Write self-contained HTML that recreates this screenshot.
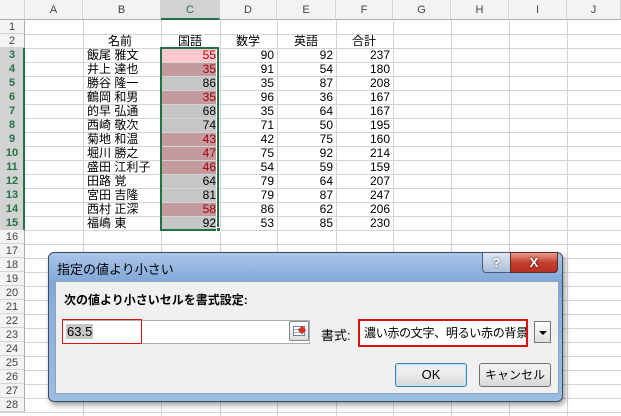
<!DOCTYPE html>
<html><head><meta charset="utf-8"><style>
*{margin:0;padding:0;box-sizing:border-box}
body{width:621px;height:416px;overflow:hidden;background:#fff;font-family:"Liberation Sans","Noto Sans CJK JP",sans-serif;position:relative}
.a{position:absolute}
.vl{position:absolute;top:0;width:1px;height:416px;background:#d4d4d4}
.hl{position:absolute;left:0;height:1px;width:621px;background:#d4d4d4}
.ch{position:absolute;top:0;height:20px;background:#f3f3f3;font-size:11px;color:#444;text-align:center;line-height:20px;border-right:1px solid #d4d4d4;border-bottom:1px solid #ababab}
.rh{position:absolute;left:0;width:25px;height:14px;font-size:11px;color:#444;text-align:center;line-height:14px;background:#f3f3f3}
.rh.s{background:#d2d2d2;color:#217346;font-weight:bold}
.t{position:absolute;font-size:12px;line-height:14px;height:14px;color:#000;white-space:nowrap}
.n{text-align:right}
.dlg{font-size:12px}
</style></head><body>
<div class="vl" style="left:83px"></div><div class="vl" style="left:161px"></div><div class="vl" style="left:220px"></div><div class="vl" style="left:277px"></div><div class="vl" style="left:336px"></div><div class="vl" style="left:393px"></div><div class="vl" style="left:451px"></div><div class="vl" style="left:509px"></div><div class="vl" style="left:567px"></div>
<div id="hls"></div>
<script>
var h='';for(var i=1;i<=28;i++){h+='<div class="hl" style="top:'+(20+i*14)+'px"></div>';}
document.getElementById('hls').innerHTML=h;
</script>
<div class="ch" style="left:0;width:25px"></div>
<div class="ch" style="left:25px;width:58px">A</div>
<div class="ch" style="left:83px;width:78px">B</div>
<div class="ch" style="left:161px;width:59px;background:#d2d2d2;color:#217346;border-bottom:2px solid #217346">C</div>
<div class="ch" style="left:220px;width:57px">D</div>
<div class="ch" style="left:277px;width:59px">E</div>
<div class="ch" style="left:336px;width:57px">F</div>
<div class="ch" style="left:393px;width:58px">G</div>
<div class="ch" style="left:451px;width:58px">H</div>
<div class="ch" style="left:509px;width:58px">I</div>
<div class="ch" style="left:567px;width:54px">J</div>
<div id="rows"></div>
<script>
var names=["飯尾 雅文","井上 達也","勝谷 隆一","鶴岡 和男","的早 弘通","西崎 敬次","菊地 和温","堀川 勝之","盛田 江利子","田路 覚","宮田 吉隆","西村 正深","福嶋 東"];
var c=[55,35,86,35,68,74,43,47,46,64,81,58,92],d=[90,91,35,96,35,71,42,75,54,79,79,86,53],e=[92,54,87,36,64,50,75,92,59,64,87,62,85],f=[237,180,208,167,167,195,160,214,159,207,247,206,230];
var s='';
for(var i=1;i<=28;i++){var y=20+(i-1)*14;s+='<div class="rh'+(i>=3&&i<=15?' s':'')+'" style="top:'+y+'px;border-bottom:1px solid #d4d4d4;border-right:1px solid #ababab">'+i+'</div>';}
s+='<div class="a" style="left:23px;top:48px;width:2px;height:182px;background:#217346"></div>';
s+='<div class="t" style="left:108px;top:34px">名前</div><div class="t" style="left:178px;top:34px">国語</div><div class="t" style="left:236px;top:34px">数学</div><div class="t" style="left:294px;top:34px">英語</div><div class="t" style="left:352px;top:34px">合計</div>';
for(var k=0;k<13;k++){var y=48+k*14;
var low=c[k]<63.5;var bg=k==0?'#ffc7ce':(low?'#c49a9e':'#c6c6c6');
s+='<div class="a" style="left:162px;top:'+(y+1)+'px;width:54px;height:13px;background:'+bg+'"></div>';
s+='<div class="t" style="left:87px;top:'+y+'px">'+names[k]+'</div>';
s+='<div class="t n" style="left:161px;width:55px;top:'+y+'px;color:'+(low?'#9c0006':'#000')+'">'+c[k]+'</div>';
s+='<div class="t n" style="left:220px;width:54px;top:'+y+'px">'+d[k]+'</div>';
s+='<div class="t n" style="left:277px;width:56px;top:'+y+'px">'+e[k]+'</div>';
s+='<div class="t n" style="left:336px;width:54px;top:'+y+'px">'+f[k]+'</div>';}
s+='<div class="a" style="left:160px;top:47px;width:59px;height:184px;border:2px solid #217346"></div>';
s+='<div class="a" style="left:216px;top:227px;width:5px;height:5px;background:#217346;border:1px solid #fff"></div>';
document.getElementById('rows').innerHTML=s;
</script>
<div class="a dlg" style="left:48px;top:252px;width:515px;height:150px;border:1px solid #3a4a63;border-radius:6px;background:linear-gradient(#aac6e8,#7fa6d8 30px,#8cb0dc 60px,#9cbde2);box-shadow:2px 3px 6px rgba(0,0,0,.4)">
<div class="a" style="left:8px;top:6px;font-size:13px;color:#000">指定の値より小さい</div>
<div class="a" style="left:433px;top:-1px;width:29px;height:21px;border:1px solid #4a5a78;border-radius:0 0 0 4px;background:linear-gradient(#dfe8f4,#a9bed8);text-align:center;font-weight:bold;color:#fff;font-size:13px;line-height:19px;text-shadow:0 0 2px #333">?</div>
<div class="a" style="left:461px;top:-1px;width:48px;height:21px;border:1px solid #5a2a2a;border-radius:0 0 4px 0;background:linear-gradient(#e8a090,#c4402e 50%,#b83020);text-align:center;font-weight:bold;color:#fff;font-size:13px;line-height:19px;text-shadow:0 0 2px #300">X</div>
<div class="a" style="left:6px;top:28px;width:504px;height:113px;background:#f0f0f0;border:1px solid #8ea3c0">
<div class="a" style="left:8px;top:9px;font-weight:bold;font-size:12px">次の値より小さいセルを書式設定:</div>
<div class="a" style="left:6px;top:38px;width:248px;height:24px;background:#fff;border:1px solid #abadb3"></div>
<div class="a" style="left:6px;top:37px;width:80px;height:25px;border:1px solid #e01010"></div>
<div class="a" style="left:10px;top:42px;background:#c8c8c8;font-size:13px;line-height:15px;padding:0 1px">63.5</div>
<div class="a" style="left:233px;top:39px;width:20px;height:20px;border:1px solid #888;border-radius:2px;background:linear-gradient(#fff,#ddd)"><div class="a" style="left:3px;top:4px;width:12px;height:10px;border:1px solid #6a8ab0;background:repeating-linear-gradient(#fff 0 2px,#9ab 2px 3px)"></div><div class="a" style="left:9px;top:5px;width:6px;height:6px;background:#d03020;transform:rotate(45deg)"></div></div>
<div class="a" style="left:265px;top:43px;font-size:13px">書式:</div>
<div class="a" style="left:302px;top:37px;width:170px;height:28px;border:2px solid #e01010;background:#fff;font-size:12px;line-height:24px;padding-left:4px;white-space:nowrap;overflow:hidden;letter-spacing:-0.3px">濃い赤の文字、明るい赤の背景</div>
<div class="a" style="left:478px;top:39px;width:17px;height:22px;border:1px solid #777;background:linear-gradient(#fff,#ddd)"><div class="a" style="left:4px;top:9px;border-left:4px solid transparent;border-right:4px solid transparent;border-top:4px solid #000"></div></div>
<div class="a" style="left:339px;top:81px;width:72px;height:24px;border:1px solid #3c7fb1;border-radius:3px;background:linear-gradient(#f2f2f2,#ebebeb 50%,#d6d6d6);text-align:center;line-height:22px;font-size:13px;box-shadow:inset 0 0 0 1px #bfe3f8">OK</div>
<div class="a" style="left:423px;top:81px;width:72px;height:24px;border:1px solid #707070;border-radius:3px;background:linear-gradient(#f2f2f2,#ebebeb 50%,#d6d6d6);text-align:center;line-height:22px;font-size:12px">キャンセル</div>
</div>
</div>
</body></html>
